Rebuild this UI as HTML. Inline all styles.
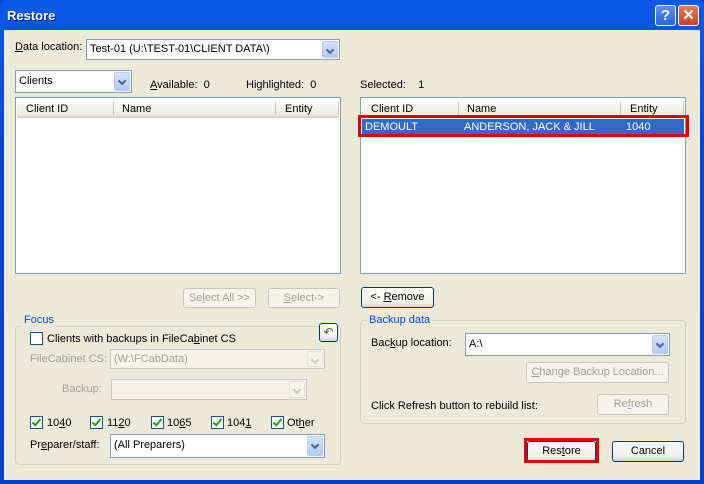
<!DOCTYPE html>
<html><head><style>
*{box-sizing:border-box}
body{margin:0;width:704px;height:484px;overflow:hidden;font-family:"Liberation Sans",Tahoma,sans-serif;font-size:11px;color:#000;background:#0a3fc8}
.a{position:absolute}
#win{position:absolute;left:0;top:0;width:704px;height:484px;background:linear-gradient(#0a5ae8,#0547d6 30%,#0542c8);border-radius:7px 7px 0 0}
#body{position:absolute;left:4px;top:30px;width:696px;height:450px;background:#ece9d8}
.t{position:absolute;white-space:nowrap;line-height:13px}
.combo{position:absolute;background:#fff;border:1px solid #7f9db9}
.combo .arr{position:absolute;right:1px;top:1px;bottom:1px;width:16px;background:linear-gradient(#d6e3fd,#b4c8f6);border:1px solid #b8cdf5;border-radius:2px}
.combo .arr:after{content:"";position:absolute;left:4px;top:5px;width:4px;height:4px;border-right:2px solid #4d6185;border-bottom:2px solid #4d6185;transform:rotate(45deg)}
.combo.dis{background:#f4f3ee;border-color:#c9c7ba}
.combo.dis .arr{background:#f4f3ee;border-color:#e4e2d8}
.combo.dis .arr:after{border-color:#c9c7ba}
.list{position:absolute;background:#fff;border:1px solid #7f9db9}
.hdr{position:absolute;left:1px;right:1px;top:1px;height:19px;background:linear-gradient(#fff,#ebeadb);border-bottom:2px solid #d6d3c2}
.sep{position:absolute;top:3px;width:1px;height:13px;background:#c7c5b2}
.btn{position:absolute;border:1px solid #003c74;border-radius:3px;background:linear-gradient(#fff,#f0efe7 80%,#d6d0c5);text-align:center;line-height:18px}
.btn.dis{border-color:#c9c7ba;color:#a19f93;background:#f4f3ee}
.grp{position:absolute;border:1px solid #d0d0bf;border-radius:4px}
.gl{position:absolute;background:#ece9d8;color:#0046d5;padding:0 2px;line-height:13px}
.cb{position:absolute;width:13px;height:13px;border:1px solid #1c5180;background:#fff}
.cb.k:after{content:"";position:absolute;left:3px;top:0px;width:3px;height:7px;border-right:2px solid #21a121;border-bottom:2px solid #21a121;transform:rotate(40deg)}
.g{color:#a19f93}
u{text-decoration:underline}
</style></head><body>
<div id="win">
<div class="t" style="left:7px;top:9px;color:#fff;font-weight:bold;font-size:13px;text-shadow:1px 1px #0a1e80">Restore</div>
<div class="a" style="left:655px;top:5px;width:21px;height:21px;border:1px solid #fff;border-radius:3px;background:linear-gradient(#5a8ef5,#2c63e3);color:#fff;font-weight:bold;font-size:15px;text-align:center;line-height:19px">?</div>
<div class="a" style="left:678px;top:5px;width:21px;height:21px;border:1px solid #fff;border-radius:3px;background:linear-gradient(#e87a5a,#c9411d);color:#fff;font-weight:bold;font-size:15px;text-align:center;line-height:19px">✕</div>
</div>
<div id="body"></div>

<div class="t" style="left:15px;top:41px"><u>D</u>ata location:</div>
<div class="combo" style="left:86px;top:39px;width:254px;height:21px"><div class="t" style="left:3px;top:3px">Test-01 (U:\TEST-01\CLIENT DATA\)</div><div class="arr"></div></div>

<div class="combo" style="left:15px;top:70px;width:117px;height:23px"><div class="t" style="left:3px;top:4px">Clients</div><div class="arr"></div></div>
<div class="t" style="left:150px;top:79px"><u>A</u>vailable:&nbsp; 0</div>
<div class="t" style="left:246px;top:79px">Highlighted:&nbsp; 0</div>
<div class="t" style="left:360px;top:79px">Selected:&nbsp;&nbsp;&nbsp; 1</div>

<div class="list" style="left:15px;top:97px;width:326px;height:177px"><div class="hdr">
<div class="t" style="left:9px;top:4px">Client ID</div><div class="sep" style="left:96px"></div>
<div class="t" style="left:105px;top:4px">Name</div><div class="sep" style="left:258px"></div>
<div class="t" style="left:268px;top:4px">Entity</div><div class="sep" style="left:321px"></div></div></div>

<div class="list" style="left:360px;top:97px;width:326px;height:177px"><div class="hdr">
<div class="t" style="left:9px;top:4px">Client ID</div><div class="sep" style="left:96px"></div>
<div class="t" style="left:105px;top:4px">Name</div><div class="sep" style="left:258px"></div>
<div class="t" style="left:268px;top:4px">Entity</div><div class="sep" style="left:321px"></div></div>
<div class="a" style="left:1px;top:21px;width:322px;height:16px;background:#316ac5;color:#fff">
<div class="t" style="left:3px;top:2px">DEMOULT</div><div class="t" style="left:102px;top:2px">ANDERSON, JACK &amp; JILL</div><div class="t" style="left:264px;top:2px">1040</div></div></div>
<div class="a" style="left:358px;top:115px;width:331px;height:22px;border:3px solid #e00000"></div>

<div class="btn dis" style="left:183px;top:288px;width:73px;height:20px">Se<u>l</u>ect All &gt;&gt;</div>
<div class="btn dis" style="left:268px;top:288px;width:72px;height:20px"><u>S</u>elect-&gt;</div>
<div class="btn" style="left:361px;top:287px;width:73px;height:21px">&lt;- <u>R</u>emove</div>

<div class="grp" style="left:15px;top:326px;width:326px;height:139px"></div>
<div class="gl" style="left:22px;top:314px">Focus</div>
<div class="btn" style="left:319px;top:323px;width:19px;height:19px;line-height:16px;font-size:12px;color:#555">↶</div>
<div class="cb" style="left:30px;top:332px"></div>
<div class="t" style="left:47px;top:333px">Clients with backups in FileCa<u>b</u>inet CS</div>
<div class="t g" style="left:30px;top:353px">FileCabinet CS:</div>
<div class="combo dis" style="left:110px;top:349px;width:215px;height:20px"><div class="t g" style="left:3px;top:3px">(W:\FCabData)</div><div class="arr"></div></div>
<div class="t g" style="left:62px;top:383px">Backup:</div>
<div class="combo dis" style="left:111px;top:379px;width:196px;height:21px"><div class="arr"></div></div>

<div class="cb k" style="left:30px;top:416px"></div><div class="t" style="left:47px;top:417px">10<u>4</u>0</div>
<div class="cb k" style="left:90px;top:416px"></div><div class="t" style="left:107px;top:417px">11<u>2</u>0</div>
<div class="cb k" style="left:151px;top:416px"></div><div class="t" style="left:167px;top:417px">10<u>6</u>5</div>
<div class="cb k" style="left:211px;top:416px"></div><div class="t" style="left:227px;top:417px">104<u>1</u></div>
<div class="cb k" style="left:271px;top:416px"></div><div class="t" style="left:287px;top:417px">Ot<u>h</u>er</div>
<div class="t" style="left:30px;top:439px">Pr<u>e</u>parer/staff:</div>
<div class="combo" style="left:110px;top:434px;width:215px;height:24px"><div class="t" style="left:3px;top:4px">(All Preparers)</div><div class="arr"></div></div>

<div class="grp" style="left:360px;top:320px;width:326px;height:104px"></div>
<div class="gl" style="left:367px;top:314px">Backup data</div>
<div class="t" style="left:371px;top:337px">Bac<u>k</u>up location:</div>
<div class="combo" style="left:465px;top:333px;width:205px;height:23px"><div class="t" style="left:3px;top:4px">A:\</div><div class="arr"></div></div>
<div class="btn dis" style="left:526px;top:362px;width:143px;height:21px"><u>C</u>hange Backup Location...</div>
<div class="t" style="left:371px;top:400px">Click Refresh button to rebuild list:</div>
<div class="btn dis" style="left:597px;top:394px;width:72px;height:21px">Re<u>f</u>resh</div>

<div class="btn" style="left:527px;top:441px;width:69px;height:21px">Res<u>t</u>ore</div>
<div class="a" style="left:524px;top:438px;width:75px;height:25px;border:3px solid #e00000"></div>
<div class="btn" style="left:612px;top:441px;width:72px;height:21px">Cancel</div>
</body></html>
